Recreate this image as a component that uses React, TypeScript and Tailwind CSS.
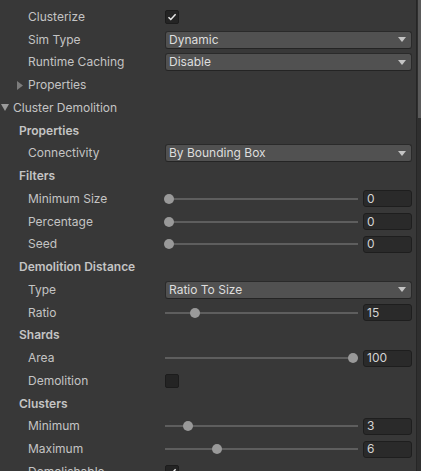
import type { ReactNode } from "react";

const ROW = "flex h-[22.75px] items-center";

function Label({ children, indent = 28 }: { children: ReactNode; indent?: number }) {
  return (
    <div className="w-[165px] shrink-0 whitespace-nowrap text-[#c4c4c4]" style={{ paddingLeft: indent }}>
      {children}
    </div>
  );
}

function Header({ children }: { children: ReactNode }) {
  return (
    <div className={ROW}>
      <div className="pl-[19px] font-semibold text-[#c4c4c4]">{children}</div>
    </div>
  );
}

function Dropdown({ value }: { value: string }) {
  return (
    <div className="flex h-[18px] flex-1 items-center justify-between rounded-[3px] border border-[#2a2a2a] border-b-[#242424] bg-[#515151] pl-[3px] pr-[5px] text-[#dedede]">
      <span>{value}</span>
      <svg width="8" height="5" viewBox="0 0 8 5">
        <path d="M0 0 H8 L4 5 Z" fill="#c4c4c4" />
      </svg>
    </div>
  );
}

function Checkbox({ checked }: { checked: boolean }) {
  return (
    <div className="flex h-[14px] w-[14px] items-center justify-center rounded-[2px] border border-[#1c1c1c] bg-[#242424]">
      {checked && (
        <svg width="10" height="8" viewBox="0 0 10 8">
          <path d="M1.5 4.2 L3.8 6.5 L8.6 1.2" stroke="#e8e8e8" strokeWidth="1.5" fill="none" />
        </svg>
      )}
    </div>
  );
}

function Slider({ value, min, max }: { value: number; min: number; max: number }) {
  const f = (value - min) / (max - min);
  return (
    <div className="flex flex-1 items-center">
      <div className="relative h-[2px] w-[193px] bg-[#5e5e5e]">
        <div
          className="absolute top-[-4px] h-[10px] w-[10px] rounded-full bg-[#999999]"
          style={{ left: -1 + f * 184 }}
        />
      </div>
      <div className="ml-[5px] flex h-[17px] w-[49px] items-center rounded-[3px] border border-[#1e1e1e] bg-[#2a2a2a] pl-[3px] text-[#d4d4d4]">
        {value}
      </div>
    </div>
  );
}

function Field({ label, children }: { label: string; children: ReactNode }) {
  return (
    <div className={ROW}>
      <Label>{label}</Label>
      <div className="flex flex-1 items-center">{children}</div>
    </div>
  );
}

export default function App() {
  return (
    <div
      className="flex h-[471px] w-[421px] overflow-hidden bg-[#383838] text-[12px] leading-[16px]"
      style={{ fontFamily: "Inter, 'Noto Sans', sans-serif" }}
    >
      <div className="flex-1 pr-[4px] pt-[5.5px]">
        <Field label="Clusterize">
          <Checkbox checked />
        </Field>
        <Field label="Sim Type">
          <Dropdown value="Dynamic" />
        </Field>
        <Field label="Runtime Caching">
          <Dropdown value="Disable" />
        </Field>
        <div className={ROW}>
          <svg className="ml-[17px] mr-[5px]" width="6" height="9" viewBox="0 0 6 9">
            <path d="M0 0 L6 4.5 L0 9 Z" fill="#7c7c7c" />
          </svg>
          <span className="text-[#c4c4c4]">Properties</span>
        </div>
        <div className={ROW}>
          <svg className="ml-[1px] mr-[4px]" width="8" height="7" viewBox="0 0 8 7">
            <path d="M0 0 H8 L4 7 Z" fill="#9a9a9a" />
          </svg>
          <span className="text-[#c4c4c4]">Cluster Demolition</span>
        </div>

        <Header>Properties</Header>
        <Field label="Connectivity">
          <Dropdown value="By Bounding Box" />
        </Field>

        <Header>Filters</Header>
        <Field label="Minimum Size">
          <Slider value={0} min={0} max={1} />
        </Field>
        <Field label="Percentage">
          <Slider value={0} min={0} max={100} />
        </Field>
        <Field label="Seed">
          <Slider value={0} min={0} max={100} />
        </Field>

        <Header>Demolition Distance</Header>
        <Field label="Type">
          <Dropdown value="Ratio To Size" />
        </Field>
        <Field label="Ratio">
          <Slider value={15} min={1} max={100} />
        </Field>

        <Header>Shards</Header>
        <Field label="Area">
          <Slider value={100} min={1} max={100} />
        </Field>
        <Field label="Demolition">
          <Checkbox checked={false} />
        </Field>

        <Header>Clusters</Header>
        <Field label="Minimum">
          <Slider value={3} min={1} max={20} />
        </Field>
        <Field label="Maximum">
          <Slider value={6} min={1} max={20} />
        </Field>
        <Field label="Demolishable">
          <Checkbox checked />
        </Field>
      </div>

      <div className="flex w-[5px] shrink-0 border-l border-[#262626] bg-[#2f2f2f]">
        <div className="mx-auto mt-0 h-[118px] w-[3px] bg-[#5a5a5a]" />
      </div>
    </div>
  );
}
